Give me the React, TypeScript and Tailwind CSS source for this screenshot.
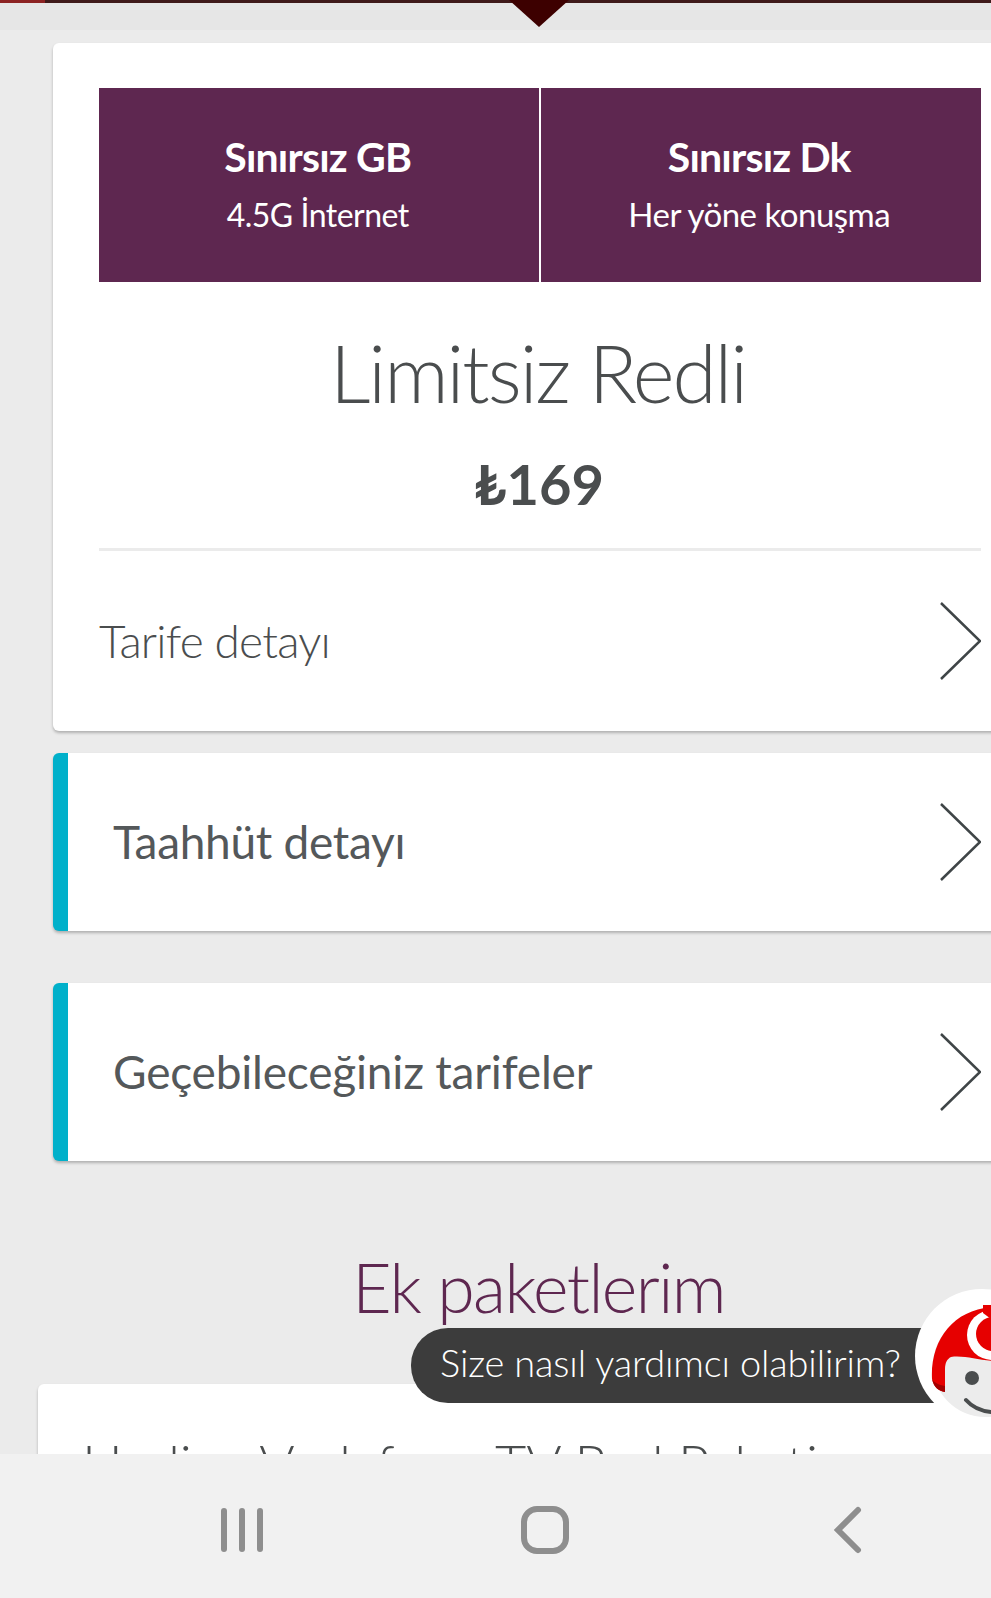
function Chevron() {
  return (
    <svg width="44" height="80" viewBox="0 0 44 80" fill="none" className="shrink-0">
      <path d="M4 2L43 40L4 78" stroke="#3f4547" strokeWidth="2.5" />
    </svg>
  );
}

function Mascot() {
  return (
    <svg width="76" height="136" viewBox="0 0 76 136" className="absolute left-[915px] top-[1289px]">
      <circle cx="67" cy="67" r="67" fill="#ffffff" />
      <circle cx="70" cy="76" r="52" fill="#ececec" />
      <path d="M17 90C15 50 40 18 82 18L140 18L140 72L82 72C65 72 50 66 36 68C32 70 30 74 30 80L30 103C24 102 19 99 17 90Z" fill="#e60000" />
      <path d="M17 90C18 93 24 96 30 97L30 103C24 102 19 99 17 90Z" fill="#a30000" />
      <circle cx="77" cy="46" r="25" fill="#ffffff" />
      <circle cx="78" cy="45" r="17" fill="#e60000" />
      <path d="M68 24L76 30L80 30L80 16L68 16Z" fill="#e60000" />
      <circle cx="57" cy="89" r="7" fill="#4a4d4e" />
      <path d="M51 111C58 119 66 122 76 123" stroke="#4a4d4e" strokeWidth="4" strokeLinecap="round" fill="none" />
    </svg>
  );
}

export default function App() {
  return (
    <div className="relative h-[1598px] w-[991px] overflow-hidden bg-[#ebebeb] font-['Lato',sans-serif] text-[#4a4d4e]">
      {/* Top strip */}
      <div className="h-[30px] bg-[#e6e6e6]">
        <div className="flex h-[3px] bg-[#3f1a1a]">
          <div className="w-[45px] bg-[#8c2323]" />
        </div>
      </div>
      <svg width="60" height="27" viewBox="0 0 60 27" className="absolute left-[509px] top-0">
        <path d="M0 0H60L30 27Z" fill="#3d0000" />
      </svg>

      {/* Plan card */}
      <div className="ml-[53px] mt-[13px] w-[974px] rounded-[6px] bg-white px-[46px] pt-[45px] shadow-[0_2px_3px_rgba(0,0,0,0.25)]">
        <div className="flex h-[194px] divide-x-2 divide-white bg-[#5e2750] text-white">
          <div className="flex flex-1 flex-col items-center pr-[2px] pt-[43px]">
            <span className="text-[41px] leading-[52px] font-bold tracking-[-0.8px]">Sınırsız GB</span>
            <span className="mt-[7px] text-[32px] leading-[50px] tracking-[-0.5px]">4.5G İnternet</span>
          </div>
          <div className="flex flex-1 flex-col items-center pr-[3px] pt-[43px]">
            <span className="text-[41px] leading-[52px] font-bold tracking-[-0.8px]">Sınırsız Dk</span>
            <span className="mt-[6px] text-[33px] leading-[50px] tracking-[-0.5px]">Her yöne konuşma</span>
          </div>
        </div>
        <div className="mt-[40px] pr-[4px] text-center text-[80px] leading-[100px] font-light tracking-[-2px]">Limitsiz Redli</div>
        <div className="mt-[31px] pr-[2px] text-center text-[56px] leading-[62px] font-bold">₺169</div>
        <div className="mt-[33px] h-[3px] bg-[#ebebeb]" />
        <div className="flex h-[180px] items-center justify-between">
          <span className="-mt-[2px] text-[46px] font-light tracking-[-0.8px]">Tarife detayı</span>
          <Chevron />
        </div>
      </div>

      {/* Accordion rows */}
      <div className="ml-[53px] mt-[22px] flex h-[178px] w-[974px] items-center justify-between overflow-hidden rounded-[6px] border-l-[15px] border-[#00b0ca] bg-white pl-[45px] pr-[46px] shadow-[0_2px_3px_rgba(0,0,0,0.25)]">
        <span className="-mt-[2px] text-[46px] tracking-[-0.3px] text-[#54585a]">Taahhüt detayı</span>
        <Chevron />
      </div>
      <div className="ml-[53px] mt-[52px] flex h-[178px] w-[974px] items-center justify-between overflow-hidden rounded-[6px] border-l-[15px] border-[#00b0ca] bg-white pl-[45px] pr-[46px] shadow-[0_2px_3px_rgba(0,0,0,0.25)]">
        <span className="-mt-[2px] text-[46px] tracking-[-0.2px] text-[#54585a]">Geçebileceğiniz tarifeler</span>
        <Chevron />
      </div>

      <div className="ml-[53px] mt-[85px] w-[974px] pr-[3px] text-center text-[68px] leading-[82px] font-light tracking-[-1.6px] text-[#5e2750]">Ek paketlerim</div>

      {/* Clipped add-on card */}
      <div className="ml-[38px] mt-[56px] h-[300px] w-[1004px] rounded-[6px] bg-white pl-[44px] pt-[40px] shadow-[0_2px_3px_rgba(0,0,0,0.25)]">
        <div className="text-[54px] leading-[80px] font-light whitespace-nowrap">Hediye Vodafone TV Red Paketi</div>
      </div>

      {/* Chat prompt */}
      <div className="absolute left-[411px] top-[1328px] flex h-[75px] w-[540px] items-center rounded-l-[37px] bg-[#3c3c3c] pb-[6px] pl-[29px] text-[38px] font-light tracking-[-0.15px] text-white">
        Size nasıl yardımcı olabilirim?
      </div>
      <Mascot />

      {/* Android nav bar */}
      <div className="absolute inset-x-0 bottom-0 h-[144px] bg-[#f1f1f1]">
        <div className="absolute left-[221px] top-[54px] flex gap-[12px]">
          <div className="h-[44px] w-[6px] rounded-full bg-[#8e8e8e]" />
          <div className="h-[44px] w-[6px] rounded-full bg-[#8e8e8e]" />
          <div className="h-[44px] w-[6px] rounded-full bg-[#8e8e8e]" />
        </div>
        <div className="absolute left-[521px] top-[52px] h-[48px] w-[48px] rounded-[16px] border-[6px] border-[#8e8e8e]" />
        <svg width="30" height="48" viewBox="0 0 30 48" fill="none" className="absolute left-[832px] top-[52px]">
          <path d="M26 4L6 24L26 44" stroke="#8e8e8e" strokeWidth="6" strokeLinecap="round" />
        </svg>
      </div>
    </div>
  );
}
